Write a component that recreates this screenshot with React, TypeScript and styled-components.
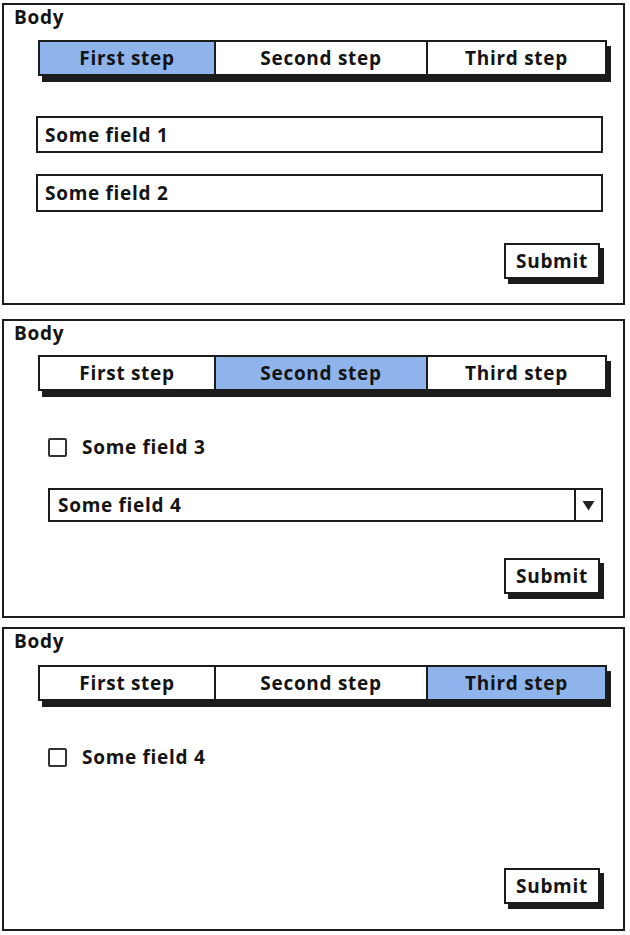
import React from "react";
import styled, { createGlobalStyle } from "styled-components";

const GlobalStyle = createGlobalStyle`
  html, body {
    margin: 0;
    padding: 0;
    background: #ffffff;
  }
  body {
    font-family: "Open Sans", "Liberation Sans", sans-serif;
    color: #141414;
  }
`;

const INK = "#1c1c1c";
const SELECTED = "#8fb4ec";

const Page = styled.div`
  display: flex;
  flex-direction: column;
  padding: 3px 0 0 2px;
  width: 630px;
`;

const Panel = styled.section<{ $height: number; $gap: number }>`
  box-sizing: border-box;
  width: 623px;
  height: ${({ $height }) => $height}px;
  margin-bottom: ${({ $gap }) => $gap}px;
  border: 2px solid ${INK};
  display: flex;
  flex-direction: column;
  padding: 1px 0 0 10px;
  font-size: 19px;
  font-weight: 700;
  letter-spacing: 0.7px;
`;

const Label = styled.div`
  line-height: 22px;
  height: 22px;
`;

const TabBar = styled.div<{ $top: number }>`
  box-sizing: border-box;
  display: flex;
  width: 569px;
  height: 36px;
  margin: ${({ $top }) => $top}px 0 0 24px;
  border: 2px solid ${INK};
  box-shadow: 4px 6px 0 ${INK};
`;

const Tab = styled.div<{ $width: number; $active: boolean }>`
  box-sizing: border-box;
  width: ${({ $width }) => $width}px;
  display: flex;
  align-items: center;
  justify-content: center;
  background: ${({ $active }) => ($active ? SELECTED : "#ffffff")};
  & + & {
    border-left: 2px solid ${INK};
  }
`;

const TextField = styled.div<{ $top: number; $height: number }>`
  box-sizing: border-box;
  width: 567px;
  height: ${({ $height }) => $height}px;
  margin: ${({ $top }) => $top}px 0 0 22px;
  border: 2px solid ${INK};
  display: flex;
  align-items: center;
  padding-left: 7px;
`;

const CheckRow = styled.label<{ $top: number }>`
  display: flex;
  align-items: center;
  gap: 15px;
  height: 20px;
  margin: ${({ $top }) => $top}px 0 0 34px;
`;

const CheckBox = styled.span`
  box-sizing: border-box;
  width: 19px;
  height: 19px;
  border: 2px solid #333;
  border-radius: 2px;
  background: #fff;
`;

const Select = styled.div<{ $top: number }>`
  box-sizing: border-box;
  display: flex;
  width: 555px;
  height: 34px;
  margin: ${({ $top }) => $top}px 0 0 34px;
  border: 2px solid ${INK};
`;

const SelectValue = styled.div`
  flex: 1;
  display: flex;
  align-items: center;
  padding-left: 8px;
`;

const SelectArrow = styled.div`
  width: 25px;
  border-left: 2px solid ${INK};
  display: flex;
  align-items: center;
  justify-content: center;
`;

const SubmitButton = styled.button<{ $top: number }>`
  box-sizing: border-box;
  align-self: flex-end;
  width: 96px;
  height: 36px;
  margin: ${({ $top }) => $top}px 23px 0 0;
  border: 2px solid ${INK};
  background: #ffffff;
  box-shadow: 4px 5px 0 ${INK};
  font: inherit;
  letter-spacing: inherit;
  color: #141414;
  padding: 0;
`;

const steps = [
  { name: "First step", width: 174 },
  { name: "Second step", width: 212 },
  { name: "Third step", width: 179 },
];

const Steps: React.FC<{ active: number; top: number }> = ({ active, top }) => (
  <TabBar $top={top}>
    {steps.map((s, i) => (
      <Tab key={s.name} $width={s.width} $active={i === active}>
        {s.name}
      </Tab>
    ))}
  </TabBar>
);

const App: React.FC = () => (
  <>
    <GlobalStyle />
    <Page>
      <Panel $height={302} $gap={14}>
        <Label>Body</Label>
        <Steps active={0} top={12} />
        <TextField $top={40} $height={37}>Some field 1</TextField>
        <TextField $top={21} $height={38}>Some field 2</TextField>
        <SubmitButton $top={31}>Submit</SubmitButton>
      </Panel>

      <Panel $height={299} $gap={9}>
        <Label>Body</Label>
        <Steps active={1} top={11} />
        <CheckRow $top={46}>
          <CheckBox />
          Some field 3
        </CheckRow>
        <Select $top={31}>
          <SelectValue>Some field 4</SelectValue>
          <SelectArrow>
            <svg width="13" height="11" viewBox="0 0 13 11">
              <path d="M0.5 1 L12.5 1 L6.5 10.5 Z" fill="#222" />
            </svg>
          </SelectArrow>
        </Select>
        <SubmitButton $top={36}>Submit</SubmitButton>
      </Panel>

      <Panel $height={304} $gap={0}>
        <Label>Body</Label>
        <Steps active={2} top={13} />
        <CheckRow $top={46}>
          <CheckBox />
          Some field 4
        </CheckRow>
        <SubmitButton $top={101}>Submit</SubmitButton>
      </Panel>
    </Page>
  </>
);

export default App;
